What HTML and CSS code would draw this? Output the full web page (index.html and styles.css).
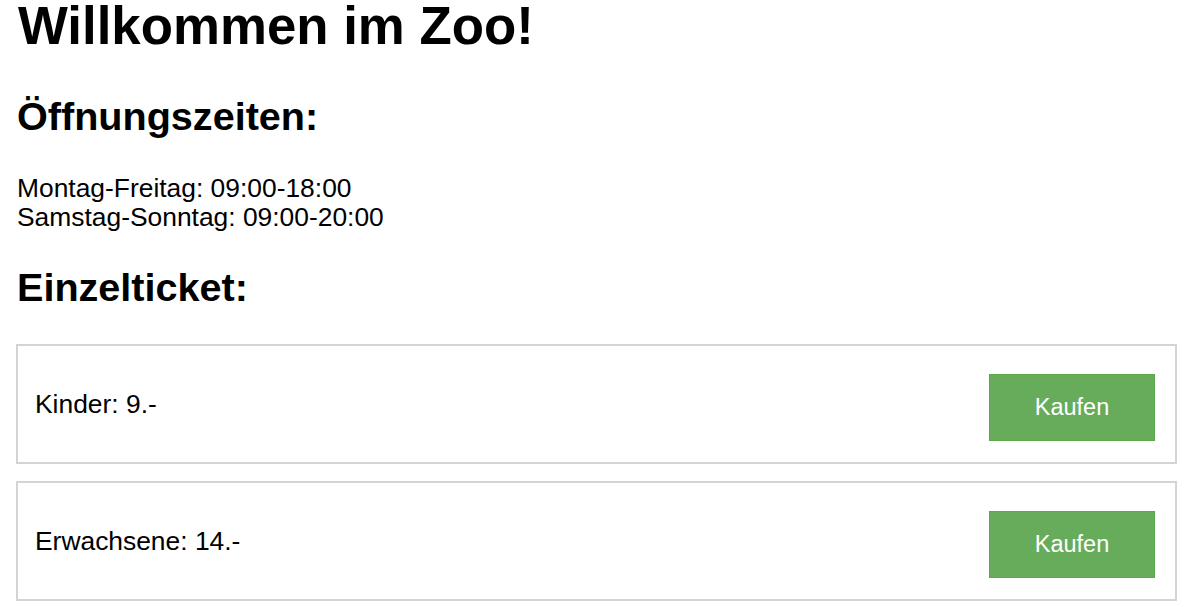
FILE: index.html
```html
<!DOCTYPE html>
<html lang="de">
<head>
<meta charset="utf-8">
<title>Zoo</title>
<link rel="stylesheet" href="styles.css">
</head>
<body>
<main class="page">
  <h1 class="title">Willkommen im Zoo!</h1>
  <h2 class="section-title">Öffnungszeiten:</h2>
  <p class="hours">Montag-Freitag: 09:00-18:00<br>Samstag-Sonntag: 09:00-20:00</p>
  <h2 class="section-title section-title--tickets">Einzelticket:</h2>
  <div class="tickets">
    <div class="ticket">
      <span class="ticket-label">Kinder: 9.-</span>
      <button class="buy-button" type="button">Kaufen</button>
    </div>
    <div class="ticket">
      <span class="ticket-label">Erwachsene: 14.-</span>
      <button class="buy-button" type="button">Kaufen</button>
    </div>
  </div>
</main>
</body>
</html>
```

FILE: styles.css
```css
html, body {
  margin: 0;
  padding: 0;
  background: #ffffff;
}

body {
  font-family: "Liberation Sans", Arial, sans-serif;
  color: #000000;
}

.page {
  padding: 0 23px 0 16px;
}

.title {
  margin: 0;
  padding-left: 2px;
  font-size: 52.8px;
  line-height: 52px;
  font-weight: bold;
}

.section-title {
  margin: 41px 0 0;
  padding-left: 1px;
  font-size: 39.6px;
  line-height: 46px;
  font-weight: bold;
}

.hours {
  margin: 35px 0 0;
  padding-left: 1px;
  font-size: 26.4px;
  line-height: 28.5px;
}

.section-title--tickets {
  margin-top: 32.7px;
}

.tickets {
  margin-top: 34.7px;
  display: flex;
  flex-direction: column;
  gap: 17px;
}

.ticket {
  box-sizing: border-box;
  height: 120px;
  border: 2px solid #d4d4d4;
  padding: 0 20px 0 17px;
  display: flex;
  align-items: center;
  justify-content: space-between;
}

.ticket-label {
  font-size: 26.4px;
  line-height: 30px;
}

.buy-button {
  box-sizing: border-box;
  width: 166px;
  height: 67px;
  margin-top: 7px;
  background: #67ac5b;
  border: 1px solid #5aa94c;
  color: #ffffff;
  font-family: "Liberation Sans", Arial, sans-serif;
  font-size: 23.5px;
  padding: 0;
  cursor: pointer;
}
```
